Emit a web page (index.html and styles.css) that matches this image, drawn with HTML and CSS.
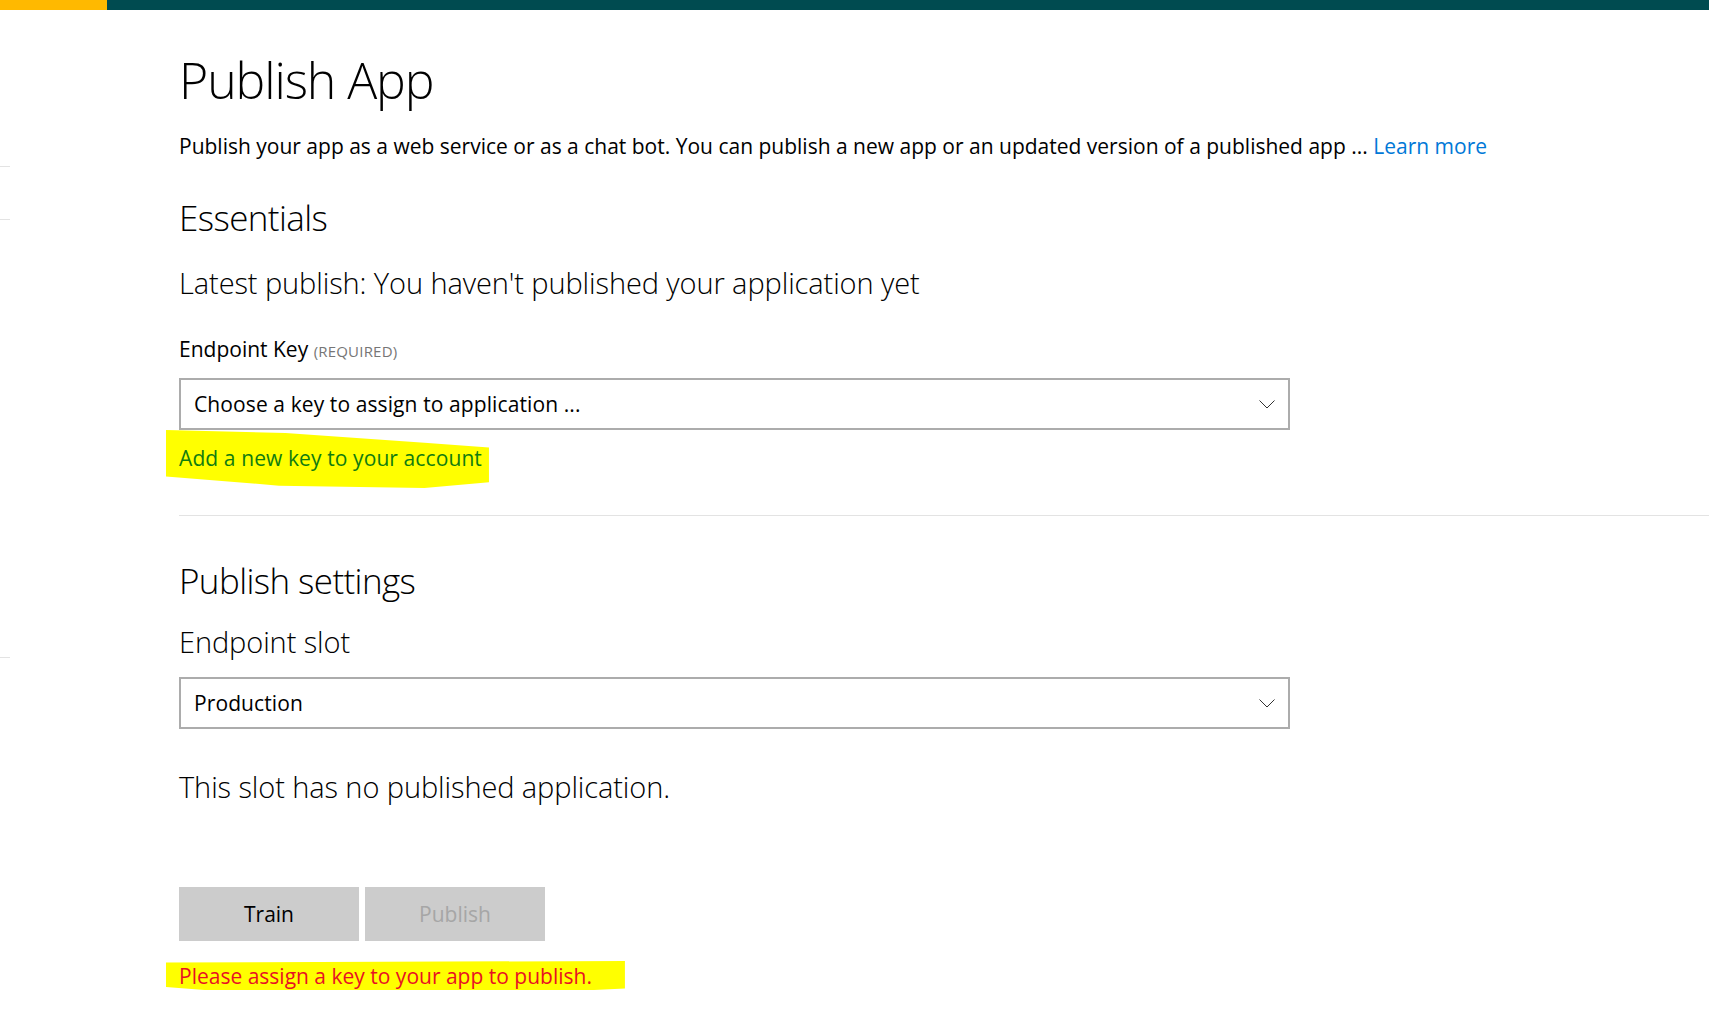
FILE: index.html
```html
<!DOCTYPE html>
<html lang="en">
<head>
<meta charset="utf-8">
<title>Publish App</title>
<link rel="stylesheet" href="styles.css">
</head>
<body>
<div class="topbar"><div class="topbar-accent"></div></div>
<div class="page">
  <div class="rail">
    <div class="rail-mark rail-mark-1"></div>
    <div class="rail-mark rail-mark-2"></div>
    <div class="rail-mark rail-mark-3"></div>
  </div>
  <main class="main">
    <h1 class="title">Publish App</h1>
    <p class="desc">Publish your app as a web service or as a chat bot. You can publish a new app or an updated version of a published app ... <a class="link" href="#">Learn more</a></p>

    <h2 class="section-title section-essentials">Essentials</h2>
    <p class="subhead latest">Latest publish: You haven't published your application yet</p>

    <div class="field-label">Endpoint Key <span class="required">(REQUIRED)</span></div>
    <div class="select select-key">
      <span class="select-text">Choose a key to assign to application ...</span>
      <svg class="chevron" width="16" height="9" viewBox="0 0 16 9"><polyline points="0.5,0.5 8,8 15.5,0.5" fill="none" stroke="#333" stroke-width="1"/></svg>
    </div>
    <div class="add-key"><span class="marker marker-add"><a class="green-link" href="#">Add a new key to your account</a></span></div>

    <div class="divider"></div>

    <h2 class="section-title section-settings">Publish settings</h2>
    <p class="subhead slot-label">Endpoint slot</p>
    <div class="select select-slot">
      <span class="select-text">Production</span>
      <svg class="chevron" width="16" height="9" viewBox="0 0 16 9"><polyline points="0.5,0.5 8,8 15.5,0.5" fill="none" stroke="#333" stroke-width="1"/></svg>
    </div>
    <p class="subhead slot-status">This slot has no published application.</p>

    <div class="buttons">
      <button class="btn btn-train">Train</button>
      <button class="btn btn-publish" disabled>Publish</button>
    </div>
    <div class="error"><span class="marker marker-error">Please assign a key to your app to publish.</span></div>
  </main>
</div>
</body>
</html>
```
FILE: styles.css
```css
* { box-sizing: border-box; }

html, body {
  margin: 0;
  padding: 0;
  background: #ffffff;
}

body {
  font-family: "Open Sans", "Noto Sans", "Liberation Sans", sans-serif;
  color: #000000;
  overflow: hidden;
}

.topbar {
  height: 10px;
  background: #004b50;
  display: flex;
}

.topbar-accent {
  width: 107px;
  background: #ffb900;
}

.page {
  display: flex;
}

.rail {
  width: 179px;
  flex: none;
  display: flex;
  flex-direction: column;
}

.rail-mark {
  width: 10px;
  height: 1px;
  background: #e3e3e3;
}

.rail-mark-1 { margin-top: 156px; }
.rail-mark-2 { margin-top: 52px; }
.rail-mark-3 { margin-top: 437px; }

.main {
  flex: 1;
  min-width: 0;
}

.title {
  margin: 40px 0 0;
  font-size: 50px;
  line-height: 60px;
  font-weight: 300;
  letter-spacing: -1.1px;
}

.desc {
  margin: 22px 0 0;
  font-size: 21px;
  line-height: 28px;
  letter-spacing: 0;
  white-space: nowrap;
}

.link {
  color: #0078d7;
  text-decoration: none;
}

.section-title {
  font-size: 35px;
  line-height: 44px;
  font-weight: 300;
  margin: 0;
  letter-spacing: -0.6px;
}

.section-essentials { margin-top: 36px; }
.section-settings { margin-top: 43px; }

.subhead {
  font-size: 29px;
  line-height: 36px;
  font-weight: 300;
  margin: 0;
  letter-spacing: -0.1px;
}

.latest { margin-top: 25px; }
.slot-label { margin-top: 21px; }
.slot-status { margin-top: 40px; }

.field-label {
  margin-top: 34px;
  font-size: 21px;
  line-height: 28px;
}

.required {
  font-size: 15px;
  color: #767676;
  letter-spacing: 0.2px;
}

.select {
  width: 1111px;
  height: 52px;
  border: 2px solid #acacac;
  display: flex;
  align-items: center;
  justify-content: space-between;
  padding: 0 13px 0 13px;
  font-size: 21px;
  letter-spacing: 0.1px;
}

.select-key { margin-top: 13px; }
.select-slot { margin-top: 17px; }

.chevron {
  display: block;
}

.add-key {
  margin-top: 14px;
  font-size: 21px;
  line-height: 28px;
  letter-spacing: 0.1px;
}

.marker {
  background: #ffff00;
}

.marker-add {
  padding: 14px 7px 16px 13px;
  margin-left: -13px;
  clip-path: polygon(0 0, 37% 5%, 80% 22%, 100% 30%, 100% 90%, 80% 100%, 35% 96%, 0 80%);
}

.green-link {
  color: #107c10;
  text-decoration: none;
}

.divider {
  margin-top: 43px;
  height: 1px;
  background: #e3e3e3;
}

.buttons {
  margin-top: 82px;
  display: flex;
  gap: 6px;
}

.btn {
  width: 180px;
  height: 54px;
  border: none;
  background: #cccccc;
  font-family: inherit;
  font-size: 21px;
  color: #000000;
  padding: 0;
}

.btn-publish {
  color: #a6a6a6;
}

.error {
  margin-top: 21px;
  font-size: 21px;
  line-height: 28px;
  color: #e81123;
}

.marker-error {
  padding: 1px 33px 8px 13px;
  margin-left: -13px;
  clip-path: polygon(0 4%, 100% 0, 100% 74%, 60% 100%, 30% 100%, 0 70%);
}
```
